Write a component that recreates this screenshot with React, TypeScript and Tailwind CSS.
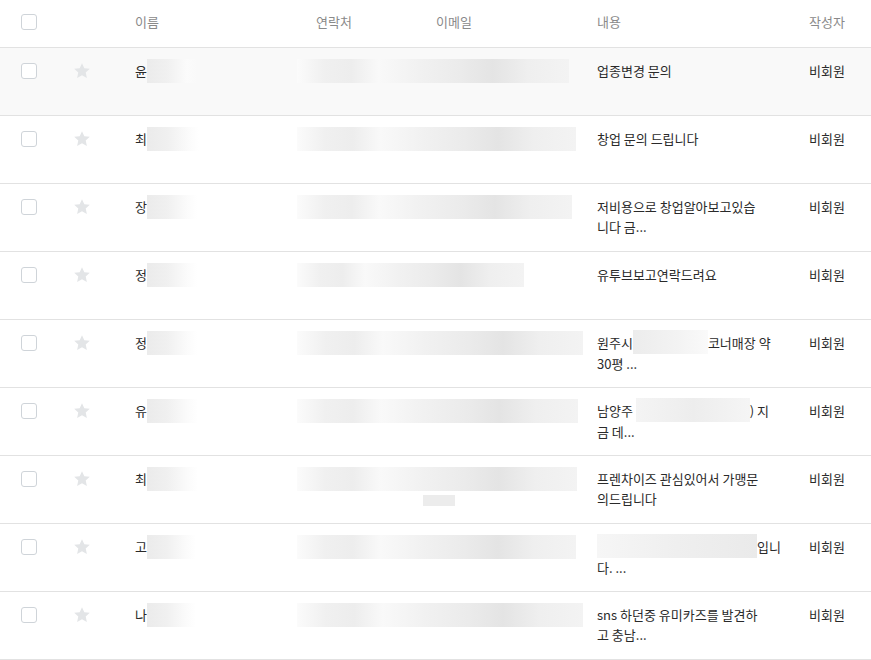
import type { ReactNode } from 'react';

type Row = {
  name: string;
  nameBlur: number; // width of blurred block after the first char
  contactBlur: number; // right edge of contact/email blur
  extraBlur?: boolean;
  content: ReactNode[];
  hover?: boolean;
};

/* 가려진 개인정보 블록 */
function Blur({ w, className = '' }: { w: number; className?: string }) {
  return <span className={`inline-block align-middle h-6 ${className}`} style={{ width: w }} />;
}

const rows: Row[] = [
  { name: '윤', nameBlur: 50, contactBlur: 272, content: ['업종변경 문의'], hover: true },
  { name: '최', nameBlur: 52, contactBlur: 279, content: ['창업 문의 드립니다'] },
  { name: '장', nameBlur: 50, contactBlur: 275, content: ['저비용으로 창업알아보고있습', '니다 금...'] },
  { name: '정', nameBlur: 50, contactBlur: 227, content: ['유투브보고연락드려요'] },
  {
    name: '정',
    nameBlur: 50,
    contactBlur: 286,
    content: [
      <>
        원주시
        <Blur w={75} className="bg-[linear-gradient(90deg,#ececec,#f3f3f3_60%,#fafafa)] -mt-1" />
        코너매장 약
      </>,
      '30평 ...',
    ],
  },
  {
    name: '유',
    nameBlur: 51,
    contactBlur: 281,
    content: [
      <>
        남양주{' '}
        <Blur w={114} className="bg-[linear-gradient(90deg,#f4f4f4,#ededed_50%,#f5f5f5)] -mt-1" />) 지
      </>,
      '금 데...',
    ],
  },
  {
    name: '최',
    nameBlur: 51,
    contactBlur: 280,
    extraBlur: true,
    content: ['프렌차이즈 관심있어서 가맹문', '의드립니다'],
  },
  {
    name: '고',
    nameBlur: 49,
    contactBlur: 279,
    content: [
      <>
        <Blur w={160} className="bg-[linear-gradient(90deg,#f6f6f6,#efefef_50%,#eaeaea)] -mt-1" />
        입니
      </>,
      '다. ...',
    ],
  },
  { name: '나', nameBlur: 49, contactBlur: 286, content: ['sns 하던중 유미카즈를 발견하', '고 충남...'] },
];

function Checkbox() {
  return <span className="block w-4 h-4 rounded-[3px] border border-[#cfd4d9] bg-white" />;
}

function StarIcon() {
  return (
    <svg width="18" height="18" viewBox="0 0 24 24" className="block -ml-[1px]">
      <path
        d="M12 1.6l3.1 6.7 7.3.8-5.45 4.95 1.55 7.2L12 17.6l-6.5 3.65 1.55-7.2L1.6 9.1l7.3-.8z"
        fill="#e3e5e7"
      />
    </svg>
  );
}

export default function App() {
  return (
    <div className="w-[871px] h-[660px] overflow-hidden bg-white font-['Noto_Sans_CJK_KR','Noto_Sans',sans-serif] text-[13px]">
      {/* header */}
      <div className="flex items-center h-[48px] pb-[4px] border-b border-[#e2e2e2] text-[#8a8a8a]">
        <div className="w-[135px] pl-[21px]">
          <Checkbox />
        </div>
        <div className="w-[181px]">이름</div>
        <div className="w-[120px]">연락처</div>
        <div className="w-[161px]">이메일</div>
        <div className="w-[212px]">내용</div>
        <div>작성자</div>
      </div>

      {rows.map((r, i) => (
        <div
          key={i}
          className={`flex items-start h-[68px] border-b border-[#e2e2e2] pt-[13px] leading-5 text-[#2a2a2a] ${
            r.hover ? 'bg-[#f9f9f9]' : ''
          }`}
        >
          <div className="w-[74px] h-5 flex items-center pl-[21px]">
            <Checkbox />
          </div>
          <div className="w-[61px] h-5 flex items-center">
            <StarIcon />
          </div>
          <div className="w-[162px] h-5 flex items-center">
            <span>{r.name}</span>
            <span
              className="block h-6 bg-[linear-gradient(90deg,#ebebeb,#f0f0f0_40%,#fbfbfb_80%,transparent)]"
              style={{ width: r.nameBlur }}
            />
          </div>
          <div className="w-[300px] flex flex-col">
            <div className="h-5 flex items-center">
              <span
                className="block h-6 bg-[linear-gradient(90deg,#fbfbfb,#f0f0f0_10%,#ededed_20%,#f9f9f9_30%,#f1f1f1_45%,#ebebeb_60%,#e4e4e4_72%,#efefef_85%,#f3f3f3)]"
                style={{ width: r.contactBlur }}
              />
            </div>
            {r.extraBlur && <span className="block ml-[126px] mt-[6px] w-[32px] h-[11px] bg-[#ececec]" />}
          </div>
          <div className="w-[212px]">
            {r.content.map((line, j) => (
              <div key={j} className="whitespace-nowrap">
                {line}
              </div>
            ))}
          </div>
          <div className="h-5 flex items-center">비회원</div>
        </div>
      ))}
    </div>
  );
}
